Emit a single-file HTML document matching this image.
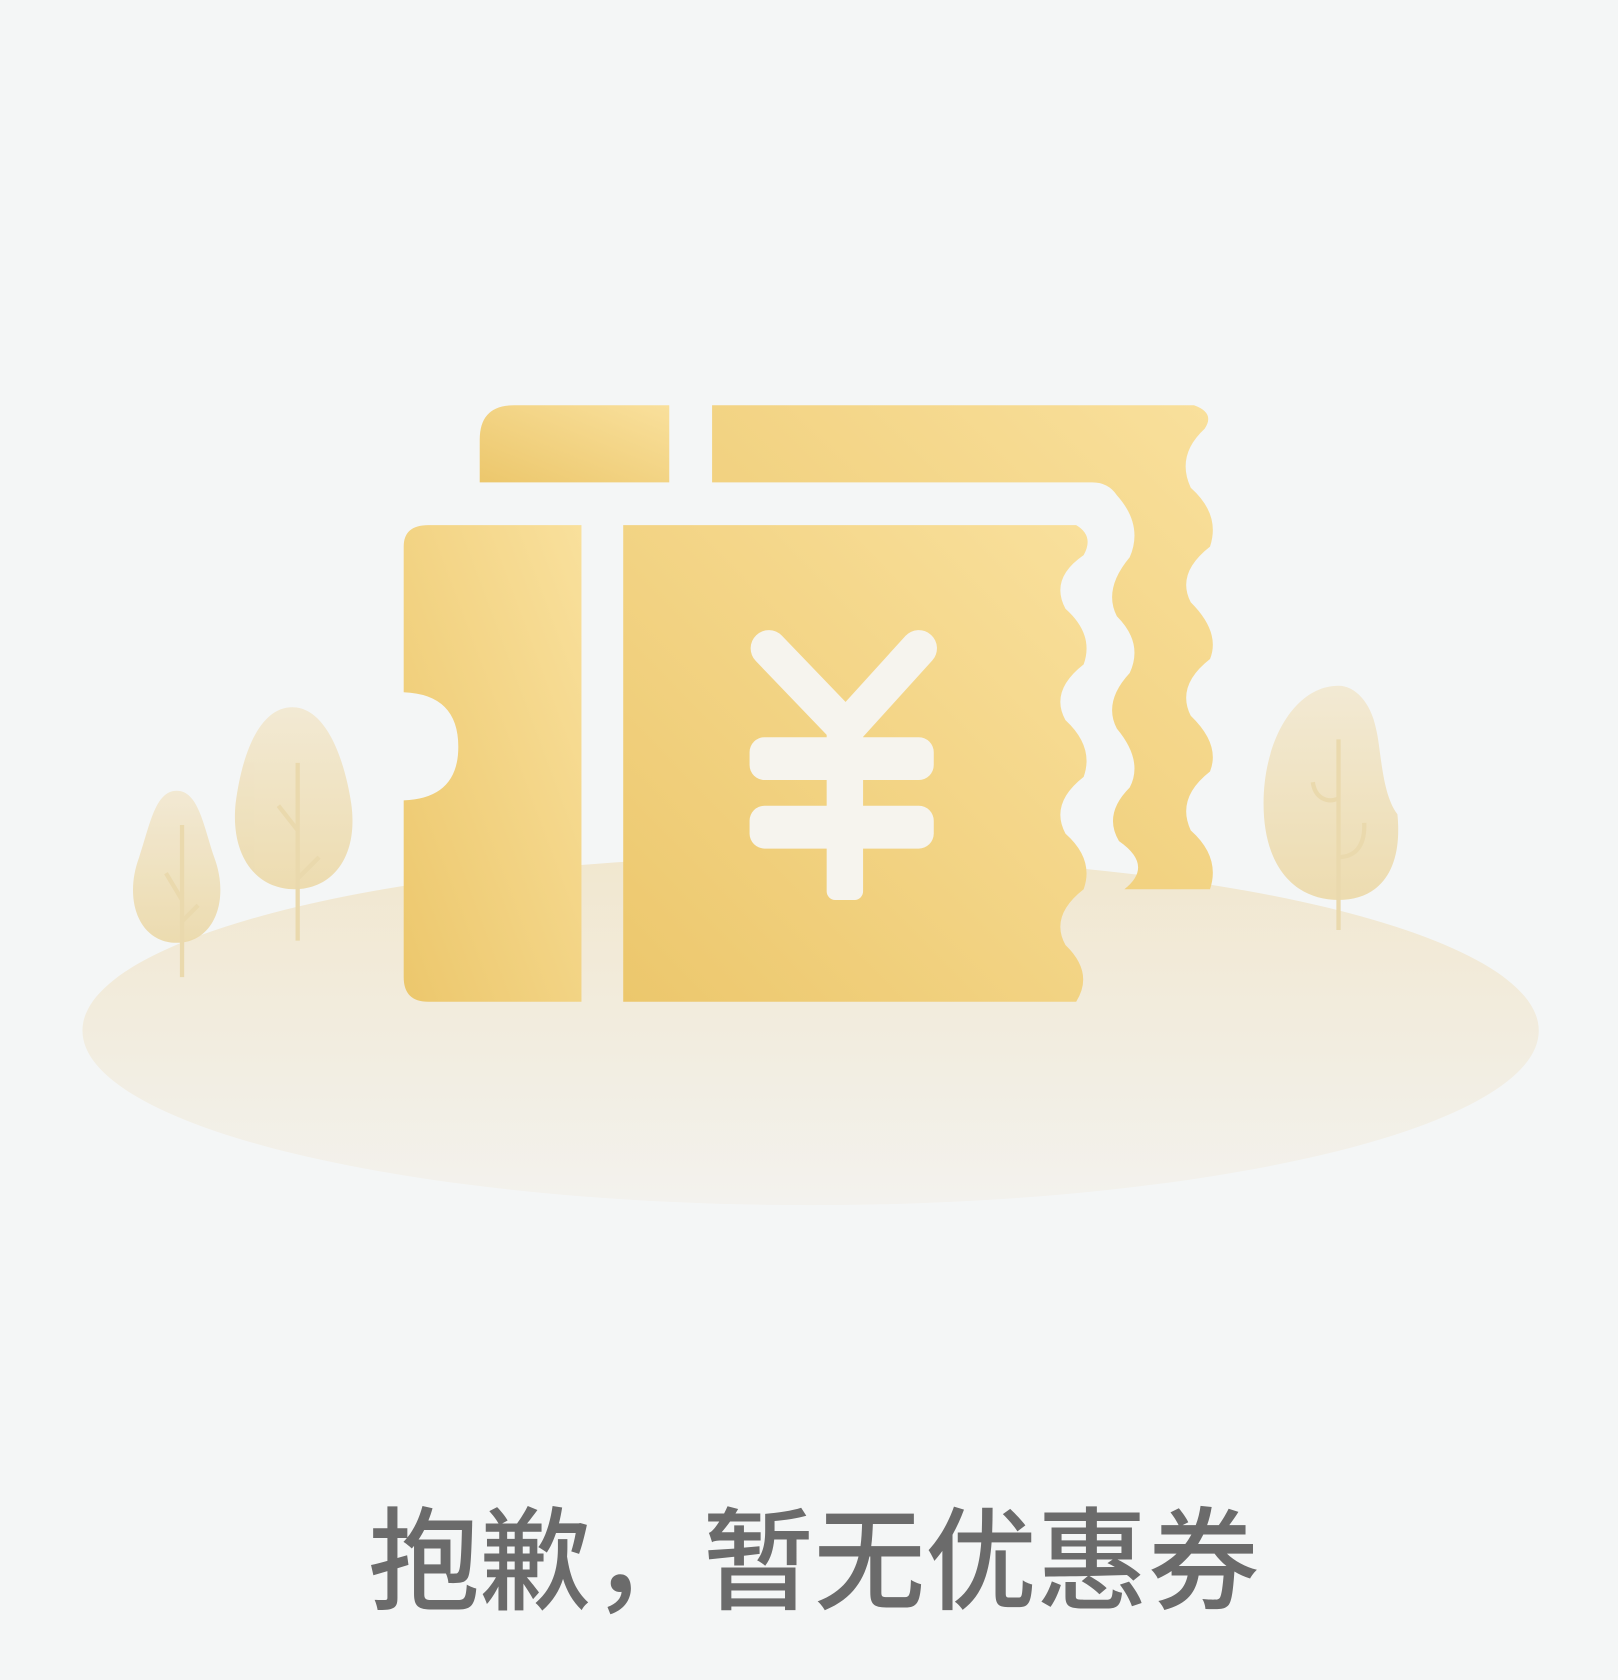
<!DOCTYPE html>
<html><head><meta charset="utf-8"><style>
html,body{margin:0;padding:0;background:#f4f6f6;}
body{width:1618px;height:1680px;overflow:hidden;}
svg{display:block}
</style></head><body>
<svg width="1618" height="1680" viewBox="0 0 1511 1568" xmlns="http://www.w3.org/2000/svg">
<defs>
<linearGradient id="g1" x1="0" y1="1" x2="1" y2="0"><stop offset="0" stop-color="#ecc76c"/><stop offset="1" stop-color="#f9e09c"/></linearGradient>
<linearGradient id="gg" x1="0" y1="0" x2="0" y2="1"><stop offset="0" stop-color="#f1e7cf"/><stop offset="1" stop-color="#f3f2ee"/></linearGradient>
<linearGradient id="gt" x1="0" y1="0" x2="0" y2="1"><stop offset="0" stop-color="#f2e8d0"/><stop offset="1" stop-color="#ecd9a8"/></linearGradient>
</defs>
<rect width="1511" height="1568" fill="#f4f6f6"/>
<ellipse cx="757" cy="962" rx="680" ry="163" fill="url(#gg)"/>
<g fill="url(#gt)" opacity="0.9">
<path d="M165 738 C145 738 140 770 130 800 C115 840 130 880 165 880 C200 880 215 840 200 800 C190 770 185 738 165 738Z"/>
<path d="M273 660 C240 660 225 710 220 750 C215 800 240 830 275 830 C310 830 335 800 328 750 C322 710 305 660 273 660Z"/>
<path d="M1250 640 C1210 640 1180 690 1180 750 C1180 810 1210 840 1250 840 C1290 840 1310 810 1305 760 C1290 740 1290 700 1285 680 C1280 655 1265 640 1250 640Z"/>
</g>
<g stroke="#ead9ad" stroke-width="4" fill="none">
<path d="M170 770 V912 M170 840 L155 815 M170 860 L185 845"/>
<path d="M278 712 V878 M278 775 L260 752 M278 820 L298 800"/>
<path d="M1250 690 V868 M1250 745 C1240 750 1228 745 1226 730 M1250 800 C1265 800 1275 790 1274 768"/>
</g>
<path d="M448 450 V410 Q448 378 480 378 H625 V450Z" fill="url(#g1)"/>
<path d="M665 378 H1115 Q1135 385 1125 400 Q1098 425 1112 455 Q1140 480 1130 510 Q1098 535 1112 562 Q1140 590 1130 615 Q1098 640 1112 668 Q1140 695 1130 720 Q1098 745 1112 775 Q1140 800 1130 830 H1050 Q1078 808 1045 785 Q1030 760 1055 735 Q1068 710 1043 680 Q1030 655 1055 628 Q1068 600 1043 575 Q1030 550 1055 520 Q1068 490 1043 462 Q1035 450 1020 450 H665Z" fill="url(#g1)"/>
<path d="M377 510 Q377 490 400 490 H543 V935 H400 Q377 935 377 912 V747 Q428 745 428 697 Q428 648 377 646Z" fill="url(#g1)"/>
<path d="M582 490 H1005 Q1022 500 1012 518 Q980 540 995 568 Q1022 592 1012 620 Q980 645 995 672 Q1022 697 1012 725 Q980 750 995 778 Q1022 802 1012 830 Q980 855 995 882 Q1022 908 1005 935 H582Z" fill="url(#g1)"/>
<g fill="#f6f4ee">
<path d="M718 605 L790 680 L858 605" stroke="#f6f4ee" stroke-width="34" stroke-linecap="round" stroke-linejoin="round" fill="none"/>
<rect x="700" y="688" width="172" height="40" rx="14"/>
<rect x="700" y="752" width="172" height="40" rx="14"/>
<rect x="772" y="670" width="34" height="170" rx="8"/>
</g>
<text x="760" y="1494" text-anchor="middle" font-family="'Liberation Sans','Noto Sans CJK SC',sans-serif" font-weight="500" font-size="104" fill="#6b6b6b">抱歉，暂无优惠券</text>
</svg>
</body></html>
